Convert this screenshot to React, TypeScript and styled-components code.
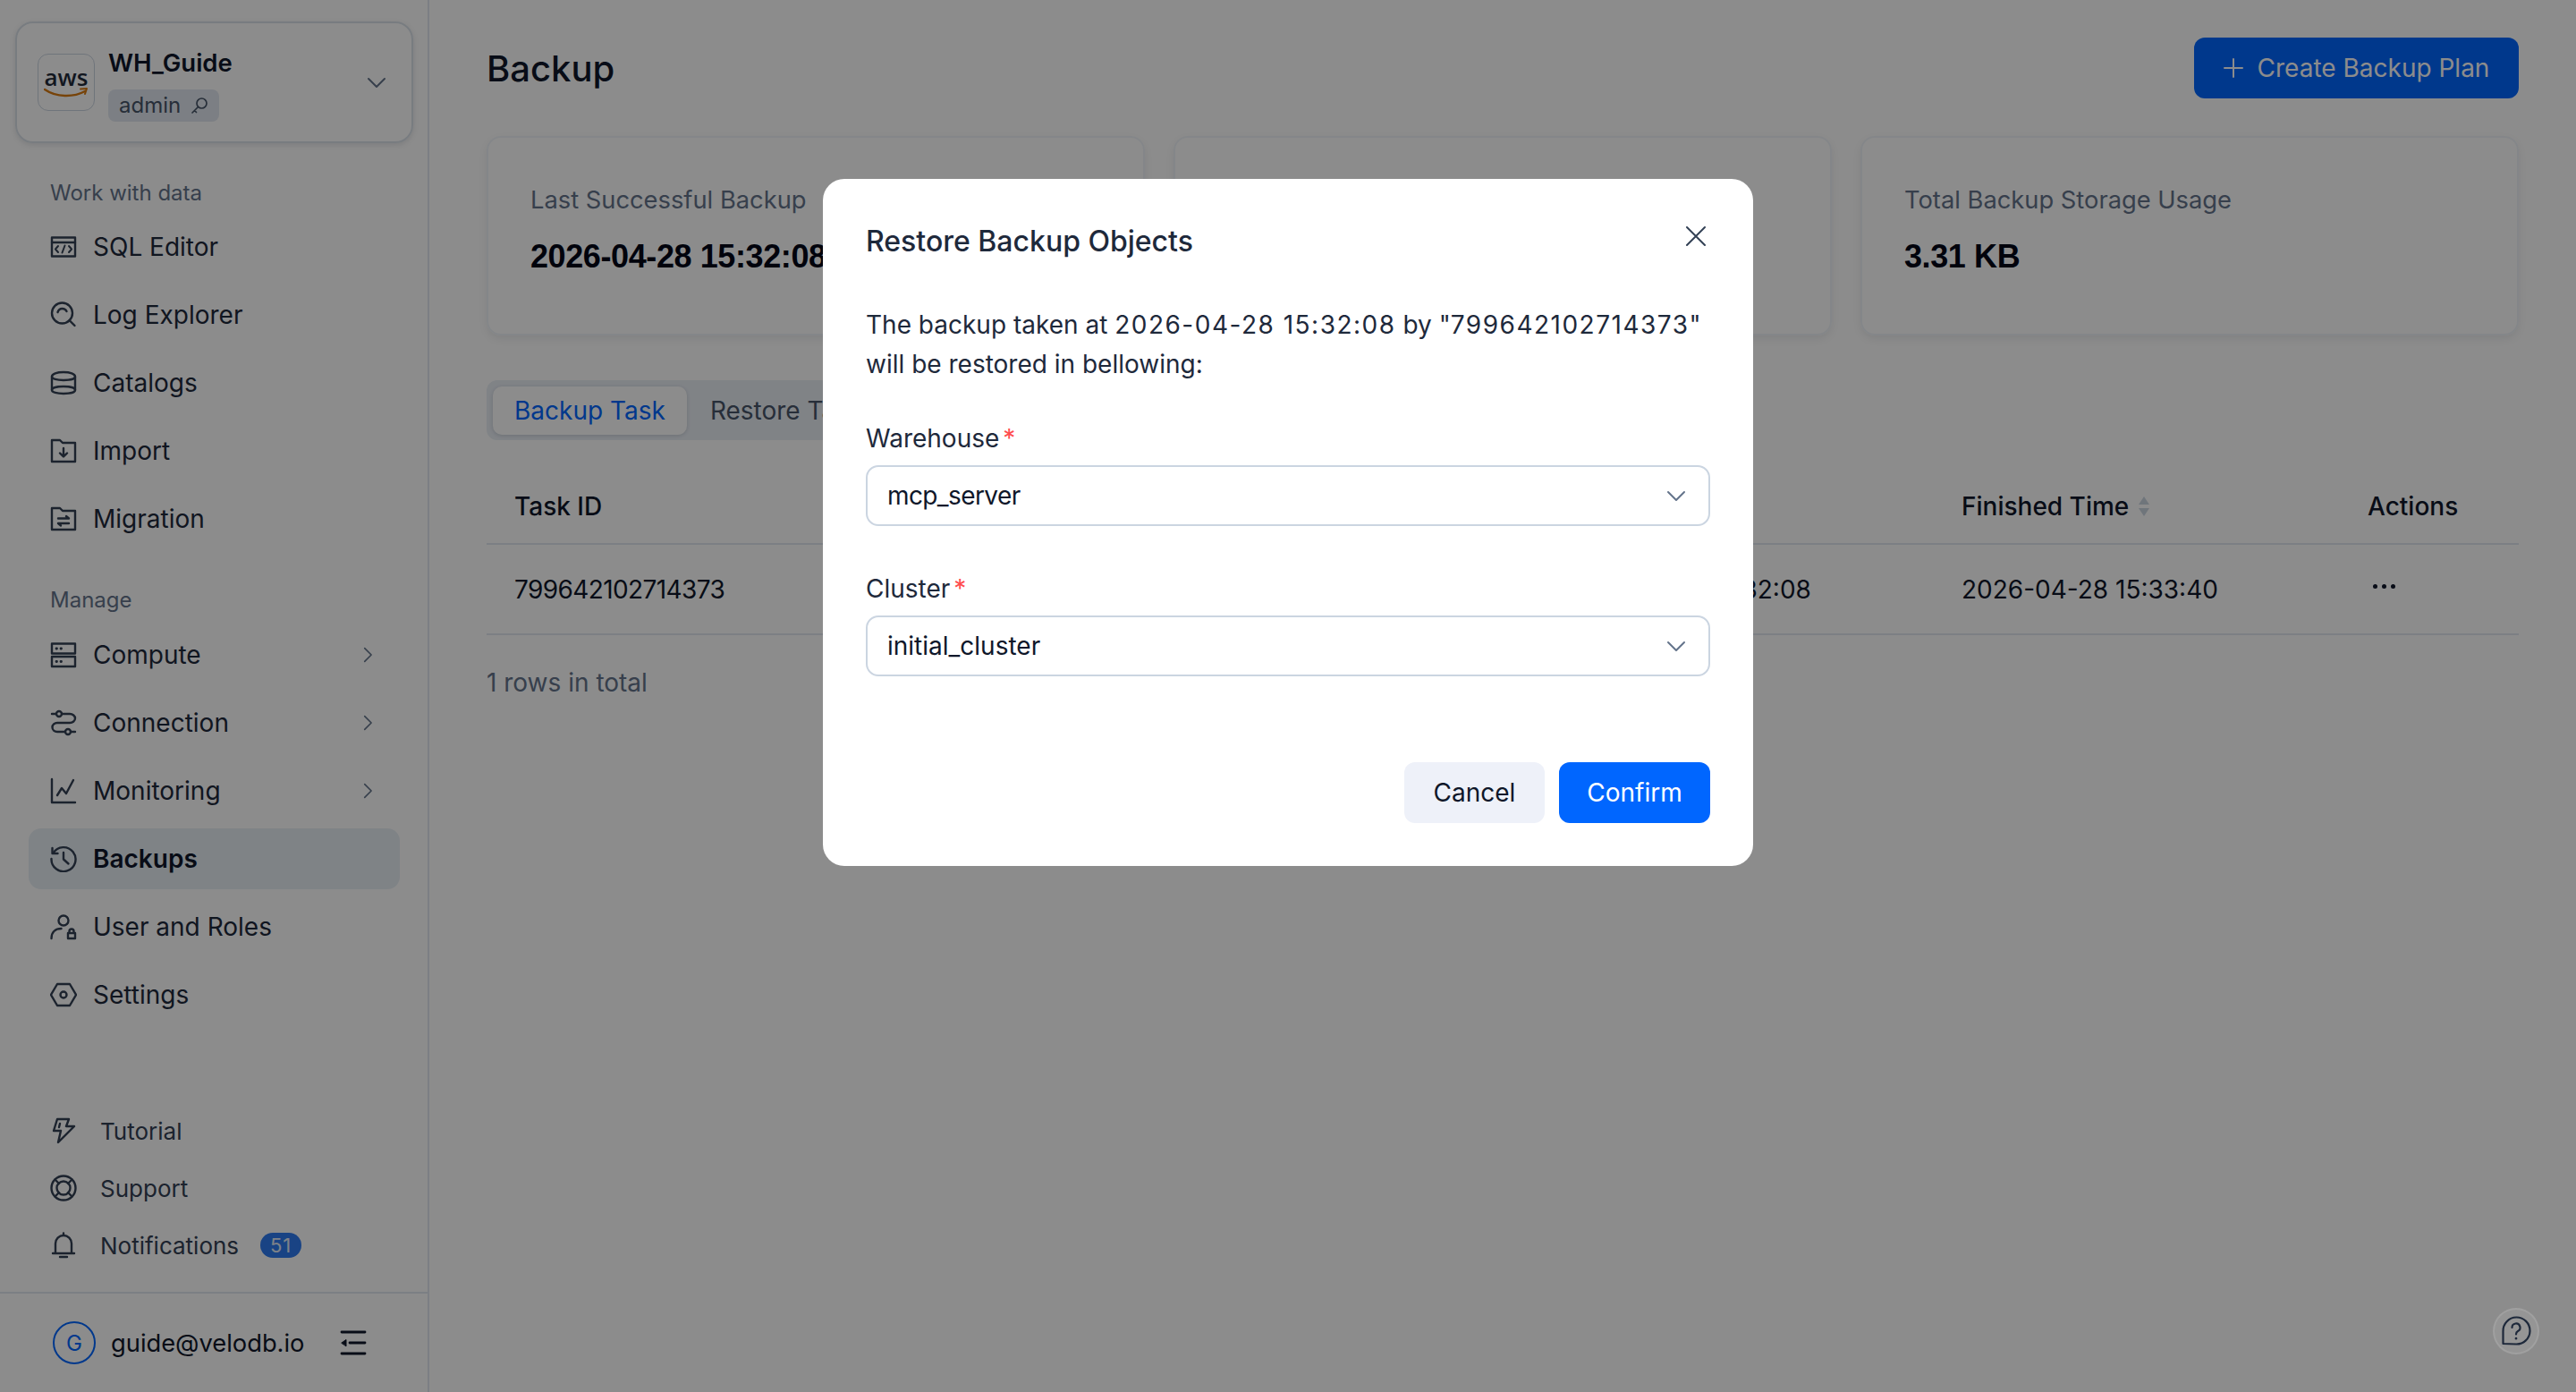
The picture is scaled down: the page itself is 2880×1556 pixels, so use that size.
import React from 'react'
import styled, { createGlobalStyle } from 'styled-components'

const GlobalStyle = createGlobalStyle`
  html, body {
    margin: 0;
    padding: 0;
    width: 2880px;
    height: 1556px;
    overflow: hidden;
    background: #fff;
    font-family: Inter, "Noto Sans", "Liberation Sans", sans-serif;
    color: #1e293b;
  }
  * { box-sizing: border-box; }
`

type IconProps = { size?: number }

const Svg: React.FC<React.PropsWithChildren<IconProps>> = ({ size = 30, children }) => (
  <svg width={size} height={size} viewBox="0 0 30 30" fill="none" stroke="currentColor" strokeWidth="2.4" strokeLinecap="round" strokeLinejoin="round">
    {children}
  </svg>
)

const SqlIcon = () => (
  <Svg>
    <path d="M2 4.500h26v21H2z" />
    <path d="M2 10h26" />
    <path d="M9 14l-3 3.500 3 3.500M21 14l3 3.500-3 3.500M16.500 13.500l-3 8" strokeWidth="2" />
  </Svg>
)
const LogIcon = () => (
  <Svg>
    <circle cx="13.500" cy="13" r="11.500" />
    <path d="M8.500 12c1-3 3-4 5-4s4 1 5 3M21.500 21l6 6" />
  </Svg>
)
const CatalogIcon = () => (
  <Svg>
    <path d="M2 8c0-3 5.500-5 13-5s13 2 13 5v15c0 2.500-5.500 4-13 4s-13-1.500-13-4z" />
    <path d="M2 8c0 2.500 5.500 4 13 4s13-1.500 13-4M2 23c0-2.500 5.500-4 13-4s13 1.500 13 4" />
  </Svg>
)
const ImportIcon = () => (
  <Svg>
    <path d="M2 3h9l3 3h14v21H2z" />
    <path d="M15 12v9M11 17.500l4 4 4-4" />
  </Svg>
)
const MigrationIcon = () => (
  <Svg>
    <path d="M2 3h9l3 3h14v21H2z" />
    <path d="M9 14.500h12l-3-2.500M21 20H9l3 2.500" />
  </Svg>
)
const ComputeIcon = () => (
  <Svg>
    <path d="M2 2.500h26v11H2zM2 17h26v11H2z" />
    <path d="M7 8h.5M12 8h.5M7 22.500h.5M12 22.500h.5" strokeWidth="2.800" />
  </Svg>
)
const ConnectionIcon = () => (
  <Svg>
    <circle cx="10" cy="5" r="3" />
    <circle cx="20" cy="25" r="3" />
    <path d="M2 5h5M13 5h9a6 5 0 0 1 0 10H8a5.500 5 0 0 0 0 10h9M23 25h5" />
  </Svg>
)
const MonitoringIcon = () => (
  <Svg>
    <path d="M2 2v26h26" />
    <path d="M8 20l5-8 5 6 8-15" />
  </Svg>
)
const BackupsIcon = () => (
  <Svg>
    <path d="M3.500 8.500A13.500 13.500 0 1 1 1.500 15" />
    <path d="M2.500 3v6h6M15 8v7.500l5.500 5" />
  </Svg>
)
const UserRoleIcon = () => (
  <Svg>
    <circle cx="15" cy="8" r="5.500" />
    <path d="M1.500 28c0-7 4.500-11 11-11M20 22h8v6h-8zM21.500 22v-2a2.500 2.500 0 0 1 5 0v2" />
  </Svg>
)
const SettingsIcon = () => (
  <Svg>
    <path d="M8 3h14l7 12-7 12H8L1 15z" />
    <circle cx="15" cy="15" r="3.500" />
  </Svg>
)
const TutorialIcon = () => (
  <Svg>
    <path d="M8 2h13l-3 8h9L9 28l3-13H4z" />
    <path d="M11 7l-1 4" />
  </Svg>
)
const SupportIcon = () => (
  <Svg>
    <circle cx="15" cy="15" r="13.500" />
    <circle cx="15" cy="15" r="7.500" />
    <path d="M5.500 5.500l4.500 4.500M24.500 5.500L20 10M5.500 24.500l4.500-4.500M24.500 24.500L20 20" />
  </Svg>
)
const BellIcon = () => (
  <Svg>
    <path d="M15 1.500v2.500M6 24V13a9 9 0 0 1 18 0v11M3 24h24M11 28h8" />
  </Svg>
)
const CollapseIcon = () => (
  <Svg>
    <path d="M2 3h26M11 15h17M2 27h26" strokeWidth="2.800" />
    <path d="M2 15l5-3.500v7z" fill="currentColor" strokeWidth="1" />
  </Svg>
)
const Chevron: React.FC<{ dir?: 'down' | 'right'; size?: number }> = ({ dir = 'down', size = 22 }) => (
  <svg width={size} height={size} viewBox="0 0 22 22" fill="none" stroke="currentColor" strokeWidth="2" strokeLinecap="round" strokeLinejoin="round">
    <path d={dir === 'down' ? 'M2 7l9 9 9-9' : 'M7 2l9 9-9 9'} />
  </svg>
)
const KeyIcon = () => (
  <svg width="20" height="20" viewBox="0 0 20 20" fill="none" stroke="currentColor" strokeWidth="1.700" strokeLinecap="round">
    <circle cx="12.500" cy="7.500" r="5.500" />
    <path d="M8.500 11.500L2 18M4.500 15.500l2 2" />
  </svg>
)
const AwsSmile = () => (
  <svg width="50" height="12" viewBox="0 0 50 12" fill="none">
    <path d="M1 2c13 9 32 9 45 2" stroke="#d97a10" strokeWidth="2.400" strokeLinecap="round" />
    <path d="M41 1.500l7-.5-2 6" stroke="#d97a10" strokeWidth="2" strokeLinecap="round" strokeLinejoin="round" />
  </svg>
)
const CloseIcon = () => (
  <svg width="24" height="24" viewBox="0 0 24 24" fill="none" stroke="currentColor" strokeWidth="2" strokeLinecap="round">
    <path d="M2 2l20 20M22 2L2 22" />
  </svg>
)
const PlusIcon = () => (
  <svg width="22" height="22" viewBox="0 0 22 22" fill="none" stroke="currentColor" strokeWidth="2" strokeLinecap="round">
    <path d="M11 1v20M1 11h20" />
  </svg>
)
const SortIcon = () => (
  <svg width="14" height="24" viewBox="0 0 14 24" fill="currentColor">
    <path d="M7 1l6 9H1zM7 23l-6-9h12z" />
  </svg>
)
const HelpIcon = () => (
  <svg width="34" height="34" viewBox="0 0 34 34" fill="none" stroke="currentColor" strokeWidth="2.200" strokeLinecap="round" strokeLinejoin="round">
    <path d="M2.500 31V17A15 15 0 1 1 17 31.500z" />
    <path d="M12.500 13a4.500 4.500 0 1 1 6.500 4c-1.500.8-2 1.500-2 3.500" />
    <path d="M17 25v.2" strokeWidth="2.600" />
  </svg>
)

const workItems = [
  { label: 'SQL Editor', icon: <SqlIcon /> },
  { label: 'Log Explorer', icon: <LogIcon /> },
  { label: 'Catalogs', icon: <CatalogIcon /> },
  { label: 'Import', icon: <ImportIcon /> },
  { label: 'Migration', icon: <MigrationIcon /> },
]
const manageItems = [
  { label: 'Compute', icon: <ComputeIcon />, more: true },
  { label: 'Connection', icon: <ConnectionIcon />, more: true },
  { label: 'Monitoring', icon: <MonitoringIcon />, more: true },
  { label: 'Backups', icon: <BackupsIcon />, active: true },
  { label: 'User and Roles', icon: <UserRoleIcon /> },
  { label: 'Settings', icon: <SettingsIcon /> },
]

const App: React.FC = () => {
  return (
    <StyledPage>
      <GlobalStyle />
      <StyledSidebar>
        <StyledWorkspace>
          <StyledLogo>
            <StyledLogoText>aws</StyledLogoText>
            <AwsSmile />
          </StyledLogo>
          <StyledWorkspaceInfo>
            <StyledWorkspaceName>WH_Guide</StyledWorkspaceName>
            <StyledRoleTag>
              admin
              <KeyIcon />
            </StyledRoleTag>
          </StyledWorkspaceInfo>
          <StyledWorkspaceChevron>
            <Chevron />
          </StyledWorkspaceChevron>
        </StyledWorkspace>

        <StyledSectionLabel>Work with data</StyledSectionLabel>
        <StyledNav>
          {workItems.map((item) => (
            <StyledNavItem key={item.label}>
              <StyledNavIcon>{item.icon}</StyledNavIcon>
              {item.label}
            </StyledNavItem>
          ))}
        </StyledNav>

        <StyledManageLabel>Manage</StyledManageLabel>
        <StyledNav>
          {manageItems.map((item) => (
            <StyledNavItem key={item.label} $active={item.active}>
              <StyledNavIcon>{item.icon}</StyledNavIcon>
              {item.label}
              {item.more && (
                <StyledNavArrow>
                  <Chevron dir="right" size={18} />
                </StyledNavArrow>
              )}
            </StyledNavItem>
          ))}
        </StyledNav>

        <StyledBottomNav>
          <StyledBottomItem>
            <StyledNavIcon><TutorialIcon /></StyledNavIcon>
            Tutorial
          </StyledBottomItem>
          <StyledBottomItem>
            <StyledNavIcon><SupportIcon /></StyledNavIcon>
            Support
          </StyledBottomItem>
          <StyledBottomItem>
            <StyledNavIcon><BellIcon /></StyledNavIcon>
            Notifications
            <StyledBadge>51</StyledBadge>
          </StyledBottomItem>
        </StyledBottomNav>

        <StyledAccount>
          <StyledAvatar>G</StyledAvatar>
          <StyledEmail>guide@velodb.io</StyledEmail>
          <StyledCollapse><CollapseIcon /></StyledCollapse>
        </StyledAccount>
      </StyledSidebar>

      <StyledMain>
        <StyledHeader>
          <StyledTitle>Backup</StyledTitle>
          <StyledCreateBtn>
            <PlusIcon />
            Create Backup Plan
          </StyledCreateBtn>
        </StyledHeader>

        <StyledCards>
          <StyledCard>
            <StyledCardLabel>Last Successful Backup</StyledCardLabel>
            <StyledCardValue>2026-04-28 15:32:08</StyledCardValue>
          </StyledCard>
          <StyledCard />
          <StyledCard>
            <StyledCardLabel>Total Backup Storage Usage</StyledCardLabel>
            <StyledCardValue>3.31 KB</StyledCardValue>
          </StyledCard>
        </StyledCards>

        <StyledTabs>
          <StyledTab $active>Backup Task</StyledTab>
          <StyledTab>Restore Task</StyledTab>
        </StyledTabs>

        <StyledHeadRow>
          <StyledCell>Task ID</StyledCell>
          <StyledCell>Start Time</StyledCell>
          <StyledCell>
            Finished Time
            <StyledSort><SortIcon /></StyledSort>
          </StyledCell>
          <StyledCell>Actions</StyledCell>
        </StyledHeadRow>
        <StyledBodyRow>
          <StyledIdCell>799642102714373</StyledIdCell>
          <StyledCell>2026-04-28 15:32:08</StyledCell>
          <StyledCell>2026-04-28 15:33:40</StyledCell>
          <StyledCell>
            <StyledDots>
              <i /><i /><i />
            </StyledDots>
          </StyledCell>
        </StyledBodyRow>
        <StyledTotal>1 rows in total</StyledTotal>
      </StyledMain>

      <StyledOverlay>
        <StyledModal>
          <StyledClose><CloseIcon /></StyledClose>
          <StyledModalTitle>Restore Backup Objects</StyledModalTitle>
          <StyledModalText>
            The backup taken at <StyledWideNum>2026-04-28 15:32:08</StyledWideNum> by "<StyledWideNum>799642102714373</StyledWideNum>" will be restored in bellowing:
          </StyledModalText>

          <StyledFieldLabel>Warehouse<StyledRequired>*</StyledRequired></StyledFieldLabel>
          <StyledSelect>
            <StyledSelectValue $tight>mcp_server</StyledSelectValue>
            <StyledSelectArrow><Chevron /></StyledSelectArrow>
          </StyledSelect>

          <StyledClusterLabel>Cluster<StyledRequired>*</StyledRequired></StyledClusterLabel>
          <StyledSelect>
            <StyledSelectValue>initial_cluster</StyledSelectValue>
            <StyledSelectArrow><Chevron /></StyledSelectArrow>
          </StyledSelect>

          <StyledFooter>
            <StyledCancelBtn>Cancel</StyledCancelBtn>
            <StyledConfirmBtn>Confirm</StyledConfirmBtn>
          </StyledFooter>
        </StyledModal>
      </StyledOverlay>

      <StyledHelp><HelpIcon /></StyledHelp>
    </StyledPage>
  )
}

const StyledPage = styled.div`
  display: flex;
  width: 2880px;
  height: 1556px;
  overflow: hidden;
  background: #fff;
`
const StyledSidebar = styled.aside`
  width: 480px;
  height: 100%;
  flex: none;
  display: flex;
  flex-direction: column;
  border-right: 2px solid #e2e8f0;
  padding-top: 24px;
`
const StyledWorkspace = styled.div`
  width: 445px;
  height: 136px;
  margin-left: 17px;
  flex: none;
  display: flex;
  align-items: center;
  padding: 0 23px;
  border: 2px solid #dbe2ea;
  border-radius: 20px;
  box-shadow: 0 2px 6px rgba(15, 23, 42, 0.12);
`
const StyledLogo = styled.div`
  width: 64px;
  height: 64px;
  flex: none;
  display: flex;
  flex-direction: column;
  align-items: center;
  justify-content: center;
  border: 1px solid #cbd5e1;
  border-radius: 12px;
`
const StyledLogoText = styled.div`
  font-size: 26px;
  line-height: 24px;
  font-weight: 600;
  color: #1f2a3a;
  font-family: "Open Sans", sans-serif;
`
const StyledWorkspaceInfo = styled.div`
  margin-left: 15px;
  padding-top: 1px;
  display: flex;
  flex-direction: column;
  align-items: flex-start;
  gap: 10px;
`
const StyledWorkspaceName = styled.div`
  font-size: 27.5px;
  line-height: 40px;
  font-weight: 600;
  color: #0f172a;
`
const StyledRoleTag = styled.div`
  display: flex;
  align-items: center;
  gap: 11px;
  height: 36px;
  padding: 0 12px;
  border-radius: 8px;
  background: #e2e8f0;
  color: #475569;
  font-size: 24px;
`
const StyledWorkspaceChevron = styled.div`
  margin-left: auto;
  margin-right: 5px;
  display: flex;
  color: #64748b;
`
const StyledSectionLabel = styled.div`
  margin: 38px 0 8px 56px;
  font-size: 24px;
  line-height: 36px;
  color: #64748b;
`
const StyledManageLabel = styled(StyledSectionLabel)`
  margin-top: 39px;
  margin-bottom: 9px;
`
const StyledNav = styled.nav`
  display: flex;
  flex-direction: column;
  gap: 8px;
`
const StyledNavItem = styled.a<{ $active?: boolean }>`
  width: 415px;
  height: 68px;
  margin-left: 32px;
  padding-left: 24px;
  display: flex;
  align-items: center;
  gap: 18px;
  border-radius: 14px;
  font-size: 28px;
  font-weight: ${(p) => (p.$active ? 600 : 400)};
  color: ${(p) => (p.$active ? '#0f172a' : '#1e293b')};
  background: ${(p) => (p.$active ? '#e8eff5' : 'transparent')};
`
const StyledNavIcon = styled.span`
  width: 30px;
  height: 30px;
  flex: none;
  display: flex;
  color: #334155;
`
const StyledNavArrow = styled.span`
  margin-left: auto;
  margin-right: 27px;
  display: flex;
  color: #64748b;
`
const StyledBottomNav = styled.nav`
  margin-top: auto;
  padding: 0 0 24px 56px;
  display: flex;
  flex-direction: column;
  gap: 8px;
`
const StyledBottomItem = styled.a`
  height: 56px;
  display: flex;
  align-items: center;
  gap: 26px;
  font-size: 26px;
  color: #334155;
`
const StyledBadge = styled.span`
  margin-left: -2px;
  height: 28px;
  min-width: 46px;
  padding: 0 8px;
  display: flex;
  align-items: center;
  justify-content: center;
  border-radius: 14px;
  background: #2f7bf0;
  color: #e6edf8;
  font-size: 22px;
  letter-spacing: 1px;
`
const StyledAccount = styled.div`
  height: 112px;
  flex: none;
  display: flex;
  align-items: center;
  padding-left: 59px;
  border-top: 2px solid #e2e8f0;
`
const StyledAvatar = styled.div`
  width: 48px;
  height: 48px;
  flex: none;
  display: flex;
  align-items: center;
  justify-content: center;
  border: 2px solid #0066ff;
  border-radius: 50%;
  color: #0066ff;
  font-size: 24px;
`
const StyledEmail = styled.div`
  margin-left: 17px;
  font-size: 27.3px;
  color: #0f172a;
`
const StyledCollapse = styled.div`
  margin-left: 40px;
  display: flex;
  color: #0f172a;
`
const StyledMain = styled.main`
  flex: 1;
  min-width: 0;
  padding: 42px 64px 0;
`
const StyledHeader = styled.header`
  height: 68px;
  display: flex;
  align-items: center;
  justify-content: space-between;
`
const StyledTitle = styled.h1`
  margin: 0;
  font-size: 40px;
  font-weight: 500;
  color: #0f172a;
`
const StyledCreateBtn = styled.button`
  height: 68px;
  width: 363px;
  display: flex;
  align-items: center;
  justify-content: center;
  gap: 16px;
  border: none;
  border-radius: 12px;
  background: #0066ff;
  color: #fff;
  font: 400 28px Inter, sans-serif;
`
const StyledCards = styled.div`
  margin-top: 42px;
  display: grid;
  grid-template-columns: repeat(3, 1fr);
  gap: 32px;
`
const StyledCard = styled.div`
  height: 223px;
  padding: 50px 0 0 47px;
  border: 2px solid #f1f5f9;
  border-radius: 16px;
  box-shadow: 0 4px 10px rgba(15, 23, 42, 0.08);
`
const StyledCardLabel = styled.div`
  font-size: 27.3px;
  line-height: 40px;
  color: #64748b;
`
const StyledCardValue = styled.div`
  margin-top: 15px;
  font-family: "Liberation Sans", Arial, sans-serif;
  font-size: 36px;
  line-height: 56px;
  font-weight: 700;
  letter-spacing: -0.4px;
  color: #020617;
  white-space: nowrap;
`
const StyledTabs = styled.div`
  margin-top: 50px;
  width: 800px;
  height: 67px;
  padding: 6px 7px;
  display: flex;
  align-items: center;
  gap: 2px;
  border-radius: 12px;
  background: #e9eef5;
`
const StyledTab = styled.div<{ $active?: boolean }>`
  height: 54px;
  padding: 0 24px;
  display: flex;
  align-items: center;
  border-radius: 10px;
  font-size: 28px;
  color: ${(p) => (p.$active ? '#0066ff' : '#475569')};
  background: ${(p) => (p.$active ? '#fff' : 'transparent')};
  box-shadow: ${(p) => (p.$active ? '0 1px 4px rgba(15, 23, 42, 0.16)' : 'none')};
`
const StyledHeadRow = styled.div`
  margin-top: 33px;
  height: 84px;
  display: grid;
  grid-template-columns: 1164px 454px 454px 1fr;
  align-items: center;
  border-bottom: 2px solid #e2e8f0;
  font-weight: 500;
  color: #0f172a;
`
const StyledBodyRow = styled.div`
  height: 101px;
  display: grid;
  grid-template-columns: 1164px 454px 454px 1fr;
  align-items: center;
  border-bottom: 2px solid #e2e8f0;
  color: #0f172a;
`
const StyledCell = styled.div`
  padding-left: 31px;
  display: flex;
  align-items: center;
  font-size: 28px;
  white-space: nowrap;
`
const StyledIdCell = styled(StyledCell)`
  letter-spacing: -0.6px;
`
const StyledSort = styled.span`
  margin-left: 10px;
  display: flex;
  color: #cbd5e1;
`
const StyledDots = styled.span`
  margin: -6px 0 0 6px;
  display: flex;
  gap: 5px;
  i {
    width: 5px;
    height: 5px;
    border-radius: 50%;
    background: #0f172a;
  }
`
const StyledTotal = styled.div`
  margin-top: 33px;
  font-size: 28px;
  line-height: 40px;
  color: #64748b;
`
const StyledOverlay = styled.div`
  position: fixed;
  inset: 0;
  z-index: 10;
  display: flex;
  justify-content: center;
  align-items: flex-start;
  padding-top: 200px;
  background: rgba(0, 0, 0, 0.45);
`
const StyledModal = styled.div`
  position: relative;
  width: 1040px;
  height: 768px;
  padding: 48px;
  display: flex;
  flex-direction: column;
  border-radius: 24px;
  background: #fff;
`
const StyledClose = styled.button`
  position: absolute;
  top: 52px;
  right: 52px;
  padding: 0;
  display: flex;
  border: none;
  background: none;
  color: #334155;
`
const StyledModalTitle = styled.div`
  font-size: 32px;
  line-height: 44px;
  font-weight: 500;
  color: #1e293b;
`
const StyledModalText = styled.div`
  margin-top: 49px;
  font-size: 28px;
  line-height: 44px;
  color: #1e293b;
`
const StyledWideNum = styled.span`
  letter-spacing: 1.5px;
`
const StyledFieldLabel = styled.label`
  margin-top: 41px;
  display: flex;
  font-size: 28px;
  line-height: 40px;
  color: #1e293b;
`
const StyledClusterLabel = styled(StyledFieldLabel)`
  margin-top: 50px;
`
const StyledRequired = styled.span`
  margin-left: 4px;
  color: #ff4d4f;
`
const StyledSelect = styled.div`
  margin-top: 10px;
  height: 68px;
  flex: none;
  display: flex;
  align-items: center;
  justify-content: space-between;
  padding: 0 25px 0 22px;
  border: 2px solid #cbd5e1;
  border-radius: 14px;
  font-size: 28px;
  color: #0f172a;
`
const StyledSelectValue = styled.span<{ $tight?: boolean }>`
  letter-spacing: ${(p) => (p.$tight ? '-0.6px' : 'normal')};
`
const StyledSelectArrow = styled.span`
  display: flex;
  color: #64748b;
`
const StyledFooter = styled.div`
  margin-top: auto;
  display: flex;
  justify-content: flex-end;
  gap: 16px;
`
const StyledCancelBtn = styled.button`
  width: 157px;
  height: 68px;
  border: none;
  border-radius: 12px;
  background: #eef1f9;
  color: #0f172a;
  font: 400 28px Inter, sans-serif;
`
const StyledConfirmBtn = styled(StyledCancelBtn)`
  width: 169px;
  background: #0066ff;
  color: #fff;
`
const StyledHelp = styled.button`
  position: fixed;
  z-index: 11;
  left: 2787px;
  top: 1462px;
  width: 52px;
  height: 52px;
  padding: 0;
  display: flex;
  align-items: center;
  justify-content: center;
  border: 2px solid rgba(255, 255, 255, 0.1);
  border-radius: 50%;
  background: rgba(255, 255, 255, 0.08);
  color: #1e293b;
`

export default App
